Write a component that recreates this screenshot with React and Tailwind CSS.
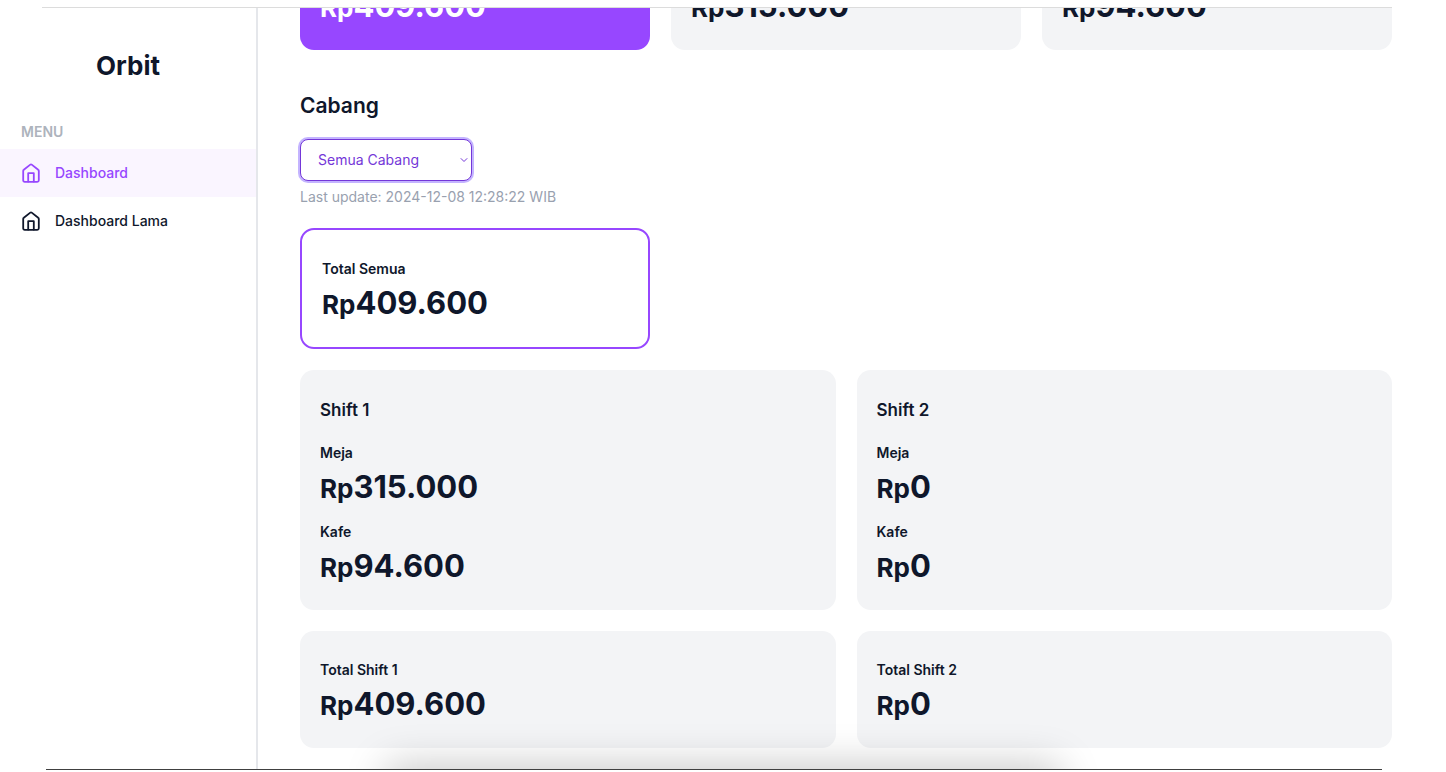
import { useState } from "react";

const menus = [
  { name: "Dashboard", href: "#dashboard" },
  { name: "Dashboard Lama", href: "#dashboard-lama" },
];

const shifts = [
  { name: "Shift 1", meja: "315.000", kafe: "94.600", total: "409.600" },
  { name: "Shift 2", meja: "0", kafe: "0", total: "0" },
];

const HomeIcon = () => (
  <svg
    className="h-5 w-5 shrink-0"
    viewBox="0 0 20 20"
    fill="none"
    stroke="currentColor"
    strokeWidth="1.8"
    strokeLinecap="round"
    strokeLinejoin="round"
    aria-hidden="true"
  >
    <path d="M2.200 8c0-.5.200-.9.600-1.200l6.500-5.200c.4-.3 1-.3 1.400 0l6.500 5.200c.4.3.6.7.6 1.200v9.300c0 .9-.6 1.500-1.500 1.500H3.700c-.9 0-1.500-.6-1.500-1.500z" />
    <path d="M7.200 18.600V10.200h5.600v8.400" />
  </svg>
);

const Amount = ({ label, value }) => (
  <div>
    <p className="text-sm leading-[21px] font-semibold">{label}</p>
    <p className="mt-2 text-[31px] leading-8 font-bold">
      <span className="text-[26px] leading-6">Rp</span>
      {value}
    </p>
  </div>
);

const Sidebar = () => {
  const [active, setActive] = useState("Dashboard");

  return (
    <aside className="w-[258px] shrink-0 border-r-2 border-gray-200">
      <h1 className="pt-[42px] text-center text-[26px] leading-8 font-bold">
        Orbit
      </h1>
      <h2 className="mt-[38px] px-[21px] text-sm leading-6 font-semibold text-[#adb3bc]">
        MENU
      </h2>
      <nav className="mt-[5px]">
        {menus.map((menu) => (
          <a
            key={menu.name}
            href={menu.href}
            onClick={() => setActive(menu.name)}
            className={`flex h-12 items-center gap-3.5 px-[21px] text-sm font-medium ${
              active === menu.name ? "bg-purple-50 text-[#9747ff]" : ""
            }`}
          >
            <HomeIcon />
            {menu.name}
          </a>
        ))}
      </nav>
    </aside>
  );
};

const App = () => {
  const [branch, setBranch] = useState("semua");

  return (
    <div className="relative flex h-screen flex-col overflow-hidden bg-white pb-0.5 font-['Inter',sans-serif] text-slate-900">
      <div className="mr-[54px] ml-[42px] h-2 shrink-0 border-b border-[#dcdcdc]" />
      <div className="relative flex min-h-0 flex-1 overflow-hidden">
        <Sidebar />
        <main className="flex min-w-0 flex-1 flex-col justify-end pr-[54px] pb-[21px] pl-[42px]">
          <section className="grid grid-cols-3 gap-[21px]">
            <div className="rounded-[14px] bg-[#9747ff] px-5 py-7 text-white">
              <Amount label="Total" value="409.600" />
            </div>
            <div className="rounded-[14px] bg-gray-100 px-5 py-7">
              <Amount label="Meja" value="315.000" />
            </div>
            <div className="rounded-[14px] bg-gray-100 px-5 py-7">
              <Amount label="Kafe" value="94.600" />
            </div>
          </section>

          <section className="mt-[42px]">
            <h2 className="text-[21px] leading-7 font-semibold">
              <label htmlFor="cabang">Cabang</label>
            </h2>
            <div className="relative mt-[19px] w-[172px] text-[#7437d8]">
              <select
                id="cabang"
                value={branch}
                onChange={(e) => setBranch(e.target.value)}
                className="block h-[42px] w-full appearance-none rounded-lg border border-[#7437d8] bg-white px-[17px] text-sm ring-2 ring-violet-300 outline-none"
              >
                <option value="semua">Semua Cabang</option>
              </select>
              <svg
                className="pointer-events-none absolute top-1/2 right-1 h-2 w-2 -translate-y-1/2"
                viewBox="0 0 8 8"
                fill="none"
                stroke="currentColor"
                aria-hidden="true"
              >
                <path d="M.8 2.300l3.200 3.200 3.200-3.200" />
              </svg>
            </div>
            <p className="mt-[5px] text-sm leading-[21px] text-gray-400">
              Last update: 2024-12-08 12:28:22 WIB
            </p>
          </section>

          <section className="mt-[21px] flex flex-col gap-[21px]">
            <div className="grid grid-cols-3 gap-[21px]">
              <div className="rounded-[14px] border-2 border-[#9747ff] px-5 py-7">
                <Amount label="Total Semua" value="409.600" />
              </div>
            </div>
            <div className="grid grid-cols-2 gap-[21px]">
              {shifts.map((shift) => (
                <div
                  key={shift.name}
                  className="rounded-[14px] bg-gray-100 px-5 py-7"
                >
                  <h3 className="mb-5 text-[17px] leading-6 font-semibold">
                    {shift.name}
                  </h3>
                  <div className="flex flex-col gap-[18px]">
                    <Amount label="Meja" value={shift.meja} />
                    <Amount label="Kafe" value={shift.kafe} />
                  </div>
                </div>
              ))}
            </div>
            <div className="grid grid-cols-2 gap-[21px]">
              {shifts.map((shift) => (
                <div
                  key={shift.name}
                  className="rounded-[14px] bg-gray-100 px-5 py-7"
                >
                  <Amount label={`Total ${shift.name}`} value={shift.total} />
                </div>
              ))}
            </div>
          </section>
        </main>
        <div className="pointer-events-none absolute top-full right-[27%] left-[27%] h-10 shadow-[0_0_40px_4px_rgba(0,0,0,0.22)]" />
      </div>
      <div className="mr-[64px] ml-[46px] h-px shrink-0 bg-neutral-700" />
    </div>
  );
};

export default App;
